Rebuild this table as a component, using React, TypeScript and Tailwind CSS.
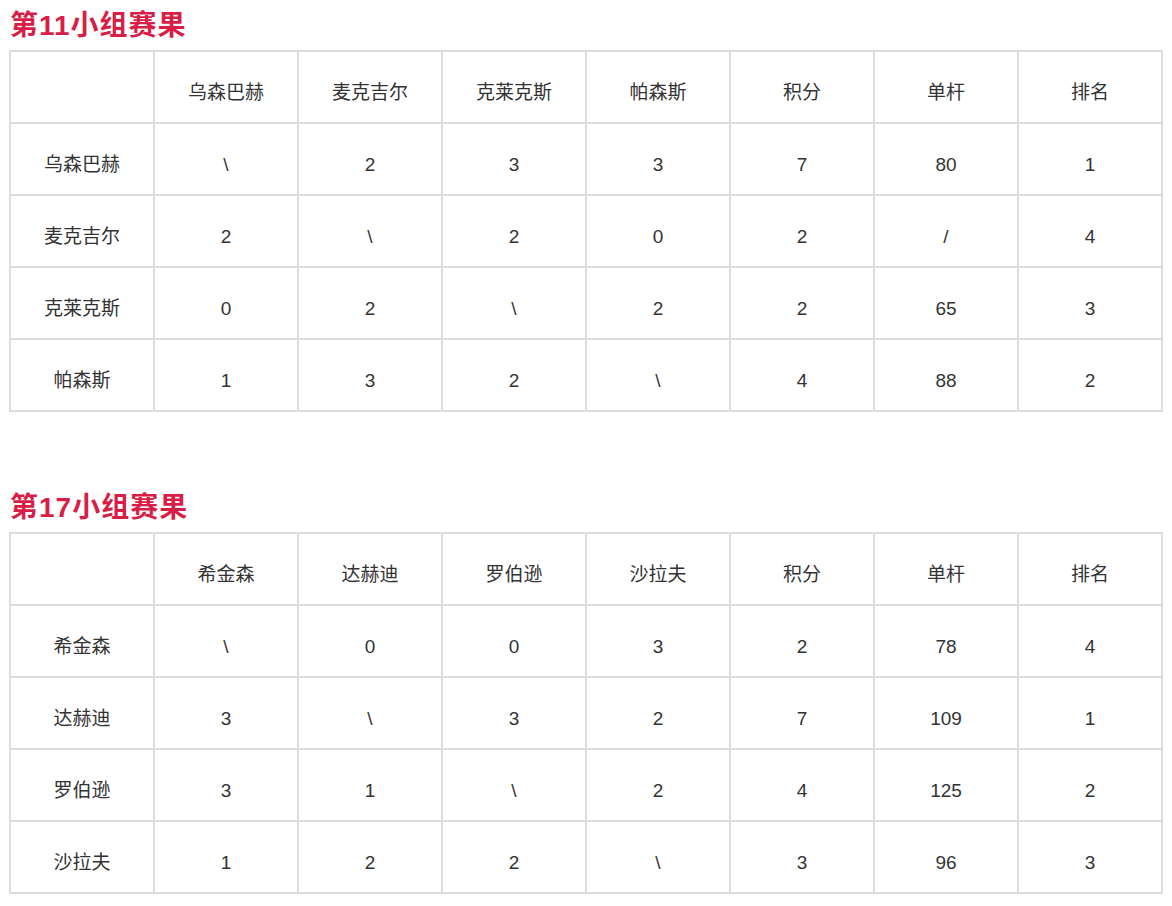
import React from "react";

type Group = {
  title: string;
  players: string[];
  rows: string[][];
};

const groups: Group[] = [
  {
    title: "第11小组赛果",
    players: ["乌森巴赫", "麦克吉尔", "克莱克斯", "帕森斯"],
    rows: [
      ["乌森巴赫", "\\", "2", "3", "3", "7", "80", "1"],
      ["麦克吉尔", "2", "\\", "2", "0", "2", "/", "4"],
      ["克莱克斯", "0", "2", "\\", "2", "2", "65", "3"],
      ["帕森斯", "1", "3", "2", "\\", "4", "88", "2"],
    ],
  },
  {
    title: "第17小组赛果",
    players: ["希金森", "达赫迪", "罗伯逊", "沙拉夫"],
    rows: [
      ["希金森", "\\", "0", "0", "3", "2", "78", "4"],
      ["达赫迪", "3", "\\", "3", "2", "7", "109", "1"],
      ["罗伯逊", "3", "1", "\\", "2", "4", "125", "2"],
      ["沙拉夫", "1", "2", "2", "\\", "3", "96", "3"],
    ],
  },
];

function Cell({ children }: { children?: React.ReactNode }) {
  return (
    <div className="h-[72px] border-l-2 border-t-2 border-[#dddddd] flex items-center justify-center pt-[12px] text-[19px] text-[#333333]">
      {children}
    </div>
  );
}

function GroupTable({ g, first }: { g: Group; first: boolean }) {
  const header = ["", ...g.players, "积分", "单杆", "排名"];
  return (
    <div className={first ? "" : "mt-[70px]"}>
      <div className="h-[50px] flex items-center pl-[10px] pt-[1px] text-[28px] font-bold tracking-[1px] text-[#d81e47] leading-none">
        {g.title}
      </div>
      <div className="ml-[9px] w-[1154px] grid grid-cols-[repeat(8,144px)] border-r-2 border-b-2 border-[#dddddd]">
        {header.map((h, i) => (
          <Cell key={"h" + i}>{h}</Cell>
        ))}
        {g.rows.map((r, ri) =>
          r.map((c, ci) => <Cell key={ri + "-" + ci}>{c}</Cell>)
        )}
      </div>
    </div>
  );
}

export default function App() {
  return (
    <div
      className="w-[1172px] h-[906px] bg-white overflow-hidden"
      style={{ fontFamily: '"Liberation Sans", "Noto Sans CJK SC", sans-serif' }}
    >
      {groups.map((g, i) => (
        <GroupTable key={g.title} g={g} first={i === 0} />
      ))}
    </div>
  );
}
